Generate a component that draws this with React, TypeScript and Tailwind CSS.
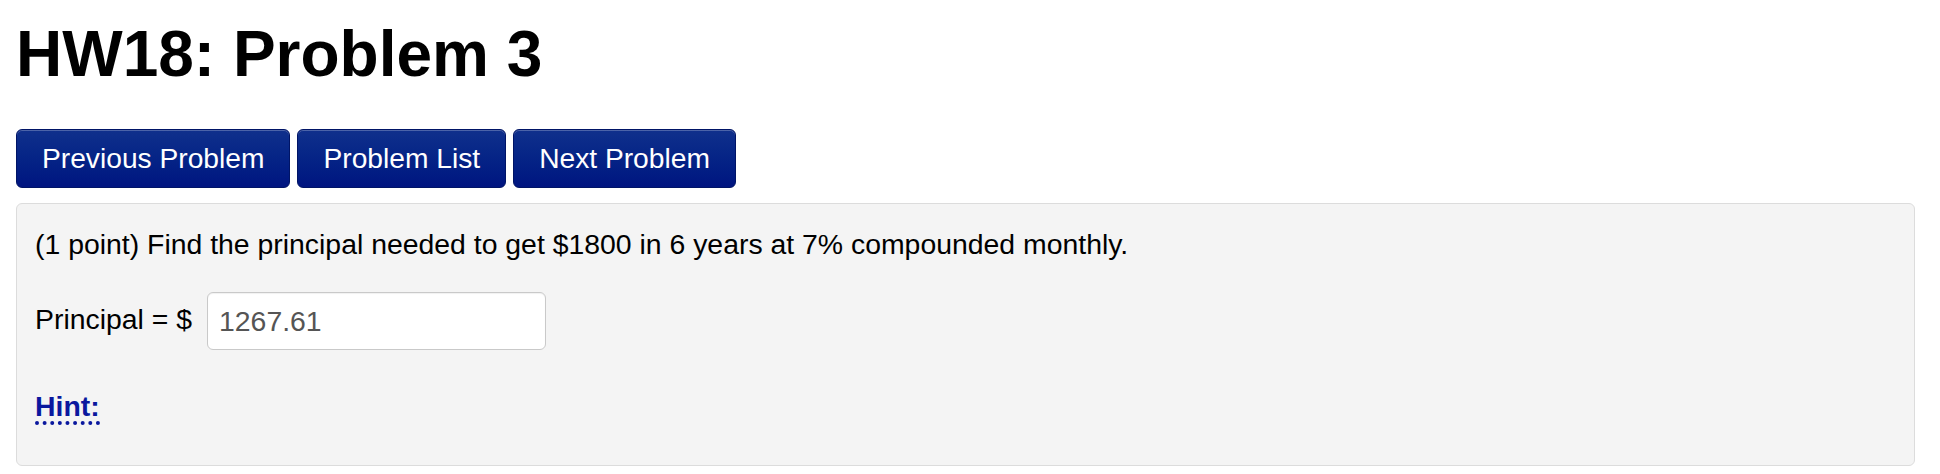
import React from "react";

const btn =
  "h-[59px] px-[25px] flex items-center rounded-[6px] border border-[#001466] bg-gradient-to-b from-[#10308c] to-[#001480] text-white text-[28.2px] leading-none shadow-[inset_0_1px_0_rgba(255,255,255,0.25)]";

export default function App() {
  return (
    <div className="bg-white w-[1940px] h-[474px] pl-4 font-['Liberation_Sans',Arial,sans-serif] text-black">
      <h1 className="pt-[22px] h-[86px] text-[64px] leading-[64px] font-bold">HW18: Problem 3</h1>
      <div className="mt-[43px] flex gap-[7px]">
        <button className={btn}>Previous Problem</button>
        <button className={btn}>Problem List</button>
        <button className={btn}>Next Problem</button>
      </div>
      <div className="mt-[15px] w-[1899px] h-[263px] box-border rounded-[6px] border border-[#dcdcdc] bg-[#f4f4f4] pt-5 pl-[18px] text-[28.4px]">
        <p className="leading-[40px]">
          (1 point) Find the principal needed to get $1800 in 6 years at 7% compounded monthly.
        </p>
        <div className="mt-[28px] flex items-start">
          <span className="mt-[7px] leading-[40px]">Principal = $</span>
          <div className="ml-[15px] w-[339px] h-[58px] box-border rounded-[6px] border border-[#c9c9c9] bg-white pl-[11px] flex items-center text-[#555555] leading-none shadow-[inset_0_1px_1px_rgba(0,0,0,0.06)]">
            1267.61
          </div>
        </div>
        <div className="mt-[35px]">
          <span className="inline-block leading-[28px] pb-[1px] font-bold text-[#0a189e] border-b-4 border-dotted border-[#0a189e]">
            Hint:
          </span>
        </div>
      </div>
    </div>
  );
}
